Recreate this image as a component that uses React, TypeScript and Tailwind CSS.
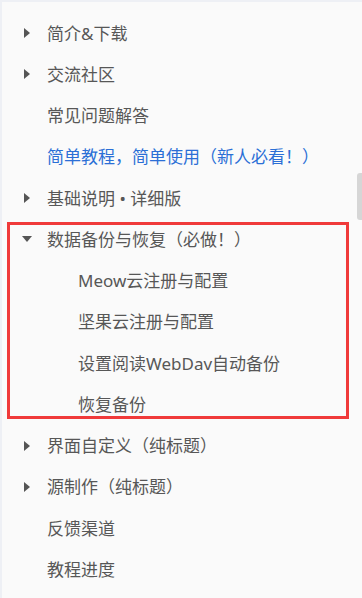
import React from "react";

type Item = {
  label: string;
  arrow?: "right" | "down";
  blue?: boolean;
  indent?: boolean;
};

const before: Item[] = [
  { label: "简介&下载", arrow: "right" },
  { label: "交流社区", arrow: "right" },
  { label: "常见问题解答" },
  { label: "简单教程，简单使用（新人必看！）", blue: true },
  { label: "基础说明 • 详细版", arrow: "right" },
];

const group: Item[] = [
  { label: "数据备份与恢复（必做！）", arrow: "down" },
  { label: "Meow云注册与配置", indent: true },
  { label: "坚果云注册与配置", indent: true },
  { label: "设置阅读WebDav自动备份", indent: true },
  { label: "恢复备份", indent: true },
];

const after: Item[] = [
  { label: "界面自定义（纯标题）", arrow: "right" },
  { label: "源制作（纯标题）", arrow: "right" },
  { label: "反馈渠道" },
  { label: "教程进度" },
];

const Arrow: React.FC<{ dir: "right" | "down" }> = ({ dir }) =>
  dir === "right" ? (
    <svg width="6" height="10" viewBox="0 0 6 10" className="shrink-0">
      <path d="M0 0 L6 5 L0 10 Z" fill="#555" />
    </svg>
  ) : (
    <svg width="10" height="6" viewBox="0 0 10 6" className="shrink-0">
      <path d="M0 0 L10 0 L5 6 Z" fill="#555" />
    </svg>
  );

const Row: React.FC<{ item: Item }> = ({ item }) => (
  <div className="flex h-[41.25px] items-center">
    <div className="flex w-[45px] shrink-0 items-center justify-center pl-[5px]">
      {item.arrow && <Arrow dir={item.arrow} />}
    </div>
    <span
      className={`whitespace-nowrap text-[17px] leading-none ${
        item.indent ? "pl-[31px]" : ""
      } ${item.blue ? "text-[#2b6fd6]" : "text-[#575757]"}`}
    >
      {item.label}
    </span>
  </div>
);

export default function App() {
  return (
    <div
      className="relative h-[598px] w-[362px] overflow-hidden border-l-2 border-t-2 border-[#eef0f5] bg-[#fafafa] pt-[10.5px]"
      style={{ fontFamily: '"Noto Sans", "Noto Sans CJK SC", sans-serif' }}
    >
      {before.map((it) => (
        <Row key={it.label} item={it} />
      ))}
      <div className="relative">
        {group.map((it) => (
          <Row key={it.label} item={it} />
        ))}
        <div className="pointer-events-none absolute bottom-[6px] left-[5px] right-[13px] top-[3px] border-[3px] border-[#f03a3a]" />
      </div>
      {after.map((it) => (
        <Row key={it.label} item={it} />
      ))}
      <div className="absolute right-0 top-[171px] h-[47px] w-[5px] rounded-l-[3px] bg-[#d6d6d6]" />
    </div>
  );
}
